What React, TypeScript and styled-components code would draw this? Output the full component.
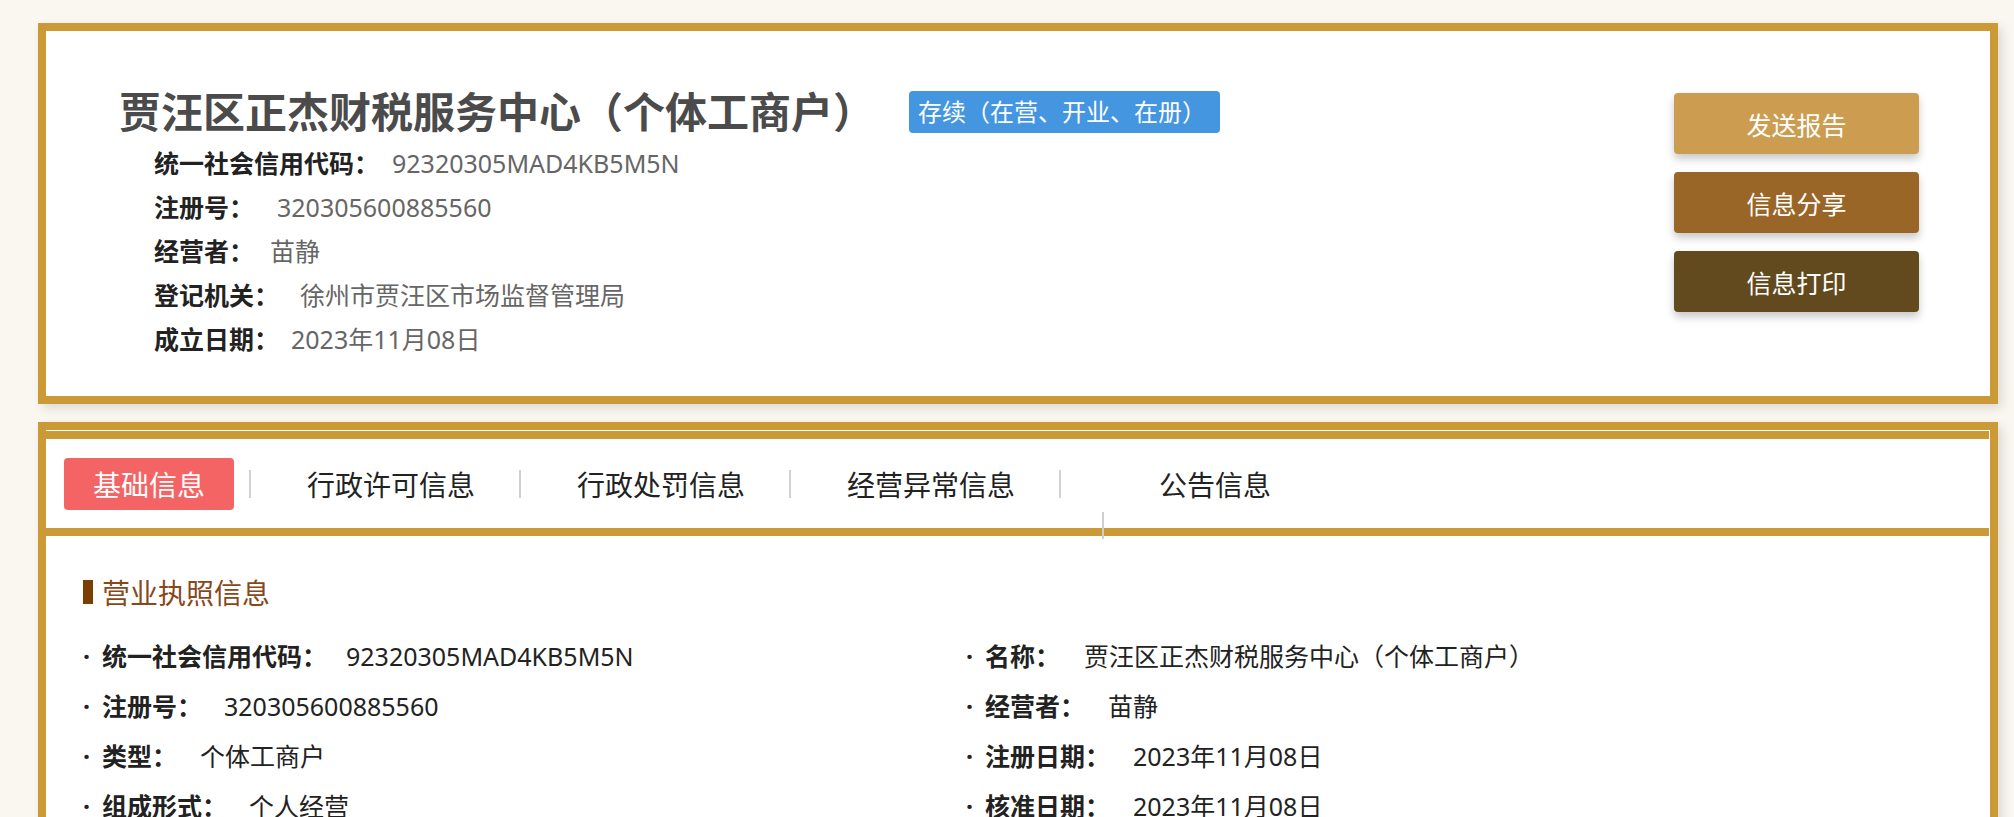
import styled, { createGlobalStyle } from 'styled-components';

const GlobalStyle = createGlobalStyle`
  body {
    margin: 0;
    background: #faf7f0;
    font-family: "Noto Sans", "Noto Sans CJK SC", sans-serif;
  }
`;

const headerRows = [
  { label: '统一社会信用代码：', value: '92320305MAD4KB5M5N', w: 238 },
  { label: '注册号：', value: '320305600885560', w: 123 },
  { label: '经营者：', value: '苗静', w: 116 },
  { label: '登记机关：', value: '徐州市贾汪区市场监督管理局', w: 146 },
  { label: '成立日期：', value: '2023年11月08日', w: 137 },
];

const actions = [
  { text: '发送报告', color: '#cc9d51' },
  { text: '信息分享', color: '#996628' },
  { text: '信息打印', color: '#634a1e' },
];

const tabs = ['基础信息', '行政许可信息', '行政处罚信息', '经营异常信息', '公告信息'];

const licenseRows = [
  { label: '统一社会信用代码：', value: '92320305MAD4KB5M5N', w: 244 },
  { label: '名称：', value: '贾汪区正杰财税服务中心（个体工商户）', w: 99 },
  { label: '注册号：', value: '320305600885560', w: 122 },
  { label: '经营者：', value: '苗静', w: 123 },
  { label: '类型：', value: '个体工商户', w: 98 },
  { label: '注册日期：', value: '2023年11月08日', w: 148 },
  { label: '组成形式：', value: '个人经营', w: 147 },
  { label: '核准日期：', value: '2023年11月08日', w: 148 },
];

function App() {
  return (
    <Page>
      <GlobalStyle />
      <Card>
        <HeaderBody>
          <Summary>
            <TitleRow>
              <Title>贾汪区正杰财税服务中心（个体工商户）</Title>
              <Badge>存续（在营、开业、在册）</Badge>
            </TitleRow>
            <InfoList>
              {headerRows.map((r) => (
                <InfoRow key={r.label}>
                  <Label $w={r.w}>{r.label}</Label>
                  <GrayValue>{r.value}</GrayValue>
                </InfoRow>
              ))}
            </InfoList>
          </Summary>
          <Actions>
            {actions.map((a) => (
              <ActionButton key={a.text} $bg={a.color}>
                {a.text}
              </ActionButton>
            ))}
          </Actions>
        </HeaderBody>
      </Card>

      <DetailCard>
        <TabBar>
          {tabs.map((t, i) => (
            <TabGroup key={t}>
              {i > 0 && <Divider />}
              <Tab $active={i === 0} $last={i === tabs.length - 1}>
                {t}
              </Tab>
            </TabGroup>
          ))}
          <StrayMark />
        </TabBar>
        <Content>
          <SectionTitle>营业执照信息</SectionTitle>
          <FieldGrid>
            {licenseRows.map((r) => (
              <Field key={r.label}>
                <Label $w={r.w}>{r.label}</Label>
                <DarkValue>{r.value}</DarkValue>
              </Field>
            ))}
          </FieldGrid>
        </Content>
      </DetailCard>
    </Page>
  );
}
export default App;

const Page = styled.div`
  padding: 23px 16px 0 38px;
  min-height: 817px;
  box-sizing: border-box;
  overflow: hidden;
`;

const Card = styled.section`
  background: #fff;
  border: 8px solid #cb9a36;
  box-shadow: 4px 4px 10px rgba(0, 0, 0, 0.12);
`;

const HeaderBody = styled.div`
  display: flex;
  justify-content: space-between;
  align-items: flex-start;
  padding: 56px 71px 35px 73px;
`;

const Summary = styled.div`
  display: flex;
  flex-direction: column;
`;

const TitleRow = styled.div`
  display: flex;
  align-items: center;
  height: 50px;
`;

const Title = styled.h1`
  margin: 0;
  font-size: 42px;
  line-height: 50px;
  font-weight: 700;
  color: #4b4b4b;
`;

const Badge = styled.span`
  margin-left: 34px;
  height: 42px;
  line-height: 42px;
  padding: 0 14px 0 9px;
  border-radius: 4px;
  background: #4596e0;
  color: #fff;
  font-size: 24px;
`;

const InfoList = styled.div`
  margin-top: 4px;
  padding-left: 35px;
`;

const InfoRow = styled.div`
  display: flex;
  height: 44px;
  line-height: 44px;
  font-size: 25px;
`;

const Label = styled.span<{ $w: number }>`
  display: inline-block;
  min-width: ${(p) => p.$w}px;
  font-weight: 700;
  color: #222;
`;

const GrayValue = styled.span`
  color: #666;
`;

const DarkValue = styled.span`
  color: #222;
`;

const Actions = styled.div`
  display: flex;
  flex-direction: column;
  gap: 18px;
  margin-top: 6px;
`;

const ActionButton = styled.button<{ $bg: string }>`
  width: 245px;
  height: 61px;
  border: none;
  border-radius: 4px;
  background: ${(p) => p.$bg};
  color: #fff;
  font-family: inherit;
  font-size: 25px;
  box-shadow: 0 5px 8px rgba(0, 0, 0, 0.22);
  cursor: pointer;
`;

const DetailCard = styled(Card)`
  margin-top: 18px;
`;

const TabBar = styled.nav`
  position: relative;
  display: flex;
  align-items: center;
  height: 89px;
  margin: 1px 1px 0 0;
  padding-left: 18px;
  border-top: 8px solid #cb9a36;
  border-bottom: 8px solid #cb9a36;
`;

const TabGroup = styled.div`
  display: flex;
  align-items: center;
`;

const Divider = styled.span`
  width: 2px;
  height: 28px;
  margin: 0 27px 0 15px;
  background: #d2d2d2;
`;

const Tab = styled.div<{ $active?: boolean; $last?: boolean }>`
  height: 52px;
  line-height: 54px;
  padding: 0 29px;
  margin-left: ${(p) => (p.$last ? '42px' : '0')};
  border-radius: 4px;
  font-size: 28px;
  color: ${(p) => (p.$active ? '#fff' : '#222')};
  background: ${(p) => (p.$active ? '#f46464' : 'transparent')};
  cursor: pointer;
`;

const StrayMark = styled.span`
  position: absolute;
  left: 1056px;
  top: 73px;
  width: 2px;
  height: 27px;
  background: #cfcfcf;
  z-index: 1;
`;

const Content = styled.div`
  padding: 36px 37px 40px;
`;

const SectionTitle = styled.h2`
  display: flex;
  align-items: center;
  margin: 0;
  height: 40px;
  font-size: 28px;
  font-weight: 400;
  color: #87491a;

  &::before {
    content: '';
    width: 10px;
    height: 24px;
    margin-right: 9px;
    background: #7a3e00;
  }
`;

const FieldGrid = styled.div`
  display: grid;
  grid-template-columns: 883px 1fr;
  grid-auto-rows: 50px;
  margin-top: 19px;
`;

const Field = styled.div`
  display: flex;
  line-height: 50px;
  font-size: 25px;

  &::before {
    content: '·';
    display: inline-block;
    width: 19px;
    font-weight: 700;
    color: #222;
  }
`;
